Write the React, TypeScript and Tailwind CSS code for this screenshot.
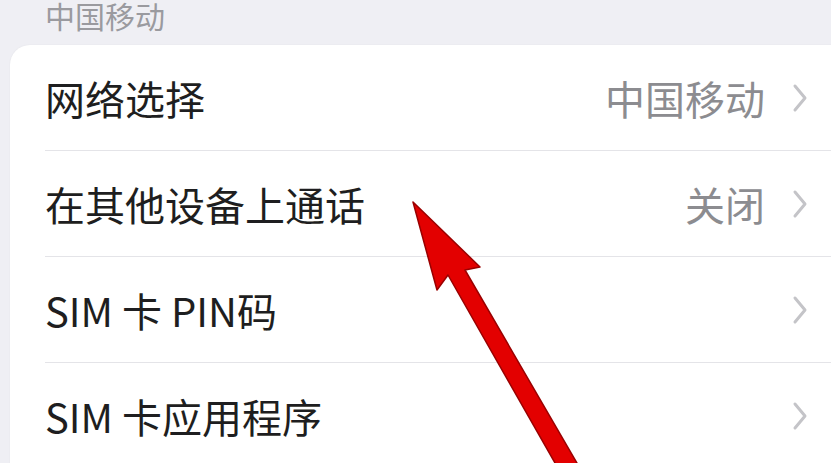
import React from 'react';

type Row = { label: string; value?: string };

const rows: Row[] = [
  { label: '网络选择', value: '中国移动' },
  { label: '在其他设备上通话', value: '关闭' },
  { label: 'SIM 卡 PIN码' },
  { label: 'SIM 卡应用程序' },
];

function Chevron() {
  return (
    <svg width="16" height="30" viewBox="0 0 16 30" fill="none" className="shrink-0">
      <path d="M3 3 L13 15 L3 27" stroke="#c4c4c8" strokeWidth="3" strokeLinecap="round" strokeLinejoin="round" />
    </svg>
  );
}

function Arrow() {
  return (
    <svg
      className="absolute left-0 top-0 pointer-events-none"
      width="831"
      height="463"
      viewBox="0 0 831 463"
    >
      <polygon
        points="413,202 480,267 465,270 581,470 559,470 448,275 437,290"
        fill="#e30000"
        stroke="#9a0000"
        strokeWidth="1.5"
        strokeLinejoin="round"
      />
    </svg>
  );
}

export default function App() {
  return (
    <div
      className="relative w-[831px] h-[463px] overflow-hidden bg-[#efeff4]"
      style={{ fontFamily: '"Noto Sans CJK SC", "Noto Sans", sans-serif' }}
    >
      {/* section header */}
      <div className="h-[45px] pl-[45px] pt-[2px] text-[30px] leading-[26px] text-[#9a9a9f]">中国移动</div>

      {/* card */}
      <div className="ml-[10px] w-[841px] rounded-tl-[20px] bg-white shadow-[0_0_2px_rgba(0,0,0,0.06)]">
        {rows.map((row, i) => (
          <div key={row.label} className="pl-[35px]">
            <div
              className={`h-[106px] flex items-center pr-[43px] ${
                i < rows.length - 1 ? 'border-b border-[#e4e4e8]' : ''
              }`}
            >
              <span className="flex-1 text-[40px] leading-none text-[#1e1e20] whitespace-pre">{row.label}</span>
              {row.value && (
                <span className="text-[40px] leading-none text-[#8c8c90] mr-[27px]">{row.value}</span>
              )}
              <Chevron />
            </div>
          </div>
        ))}
      </div>

      <Arrow />
    </div>
  );
}
